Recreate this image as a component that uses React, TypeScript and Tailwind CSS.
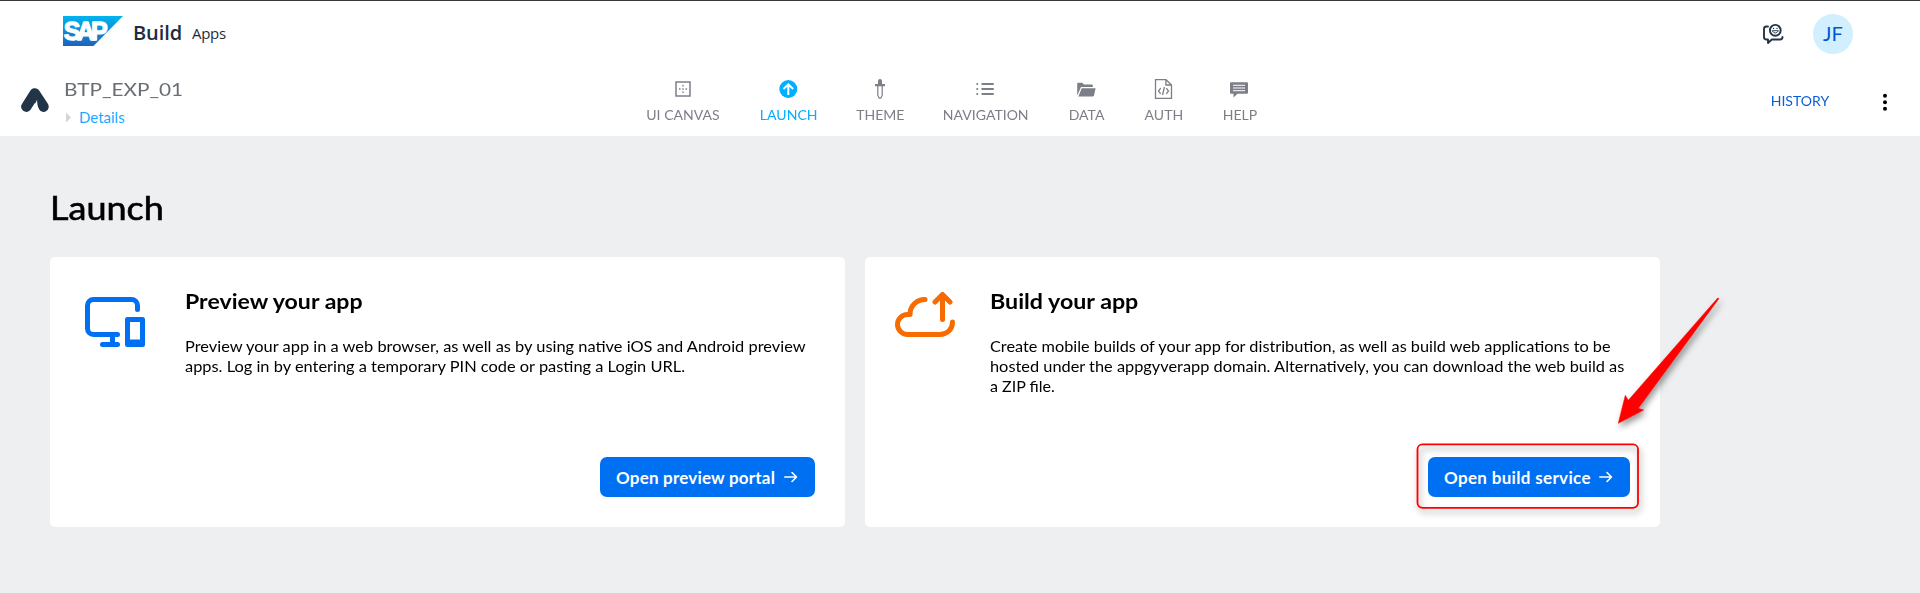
import React from "react";

type NavItem = { label: string; box: string; text: string; icon: React.ReactNode };

const navItems: NavItem[] = [
  {
    label: "UI CANVAS",
    box: "w-[74px]",
    text: "text-[#7d7f88]",
    icon: (
      <svg width="20" height="20" viewBox="0 0 20 20" fill="none">
        <rect x="3" y="3" width="14" height="14" stroke="#7d7f88" strokeWidth="1.5" />
        <path d="M9.3 6h1.4v1.5H9.3zM9.3 9.2h1.4v1.5H9.3zM9.3 12.5h1.4V14H9.3zM6 9.2h1.5v1.5H6zM12.5 9.2H14v1.5h-1.5z" fill="#7d7f88" />
      </svg>
    ),
  },
  {
    label: "LAUNCH",
    box: "w-[57px]",
    text: "text-[#00b0ff]",
    icon: (
      <svg width="20" height="20" viewBox="0.7 0 20 20" fill="none">
        <circle cx="10" cy="10" r="9" fill="#00b0ff" />
        <path d="M10 16V5.6M5.2 9.9L10 5.4l4.8 4.5" stroke="#fff" strokeWidth="2" />
      </svg>
    ),
  },
  {
    label: "THEME",
    box: "w-[46px]",
    text: "text-[#7d7f88]",
    icon: (
      <svg width="20" height="20" viewBox="0 0 20 20" fill="none">
        <path d="M8 5V2a2 2 0 0 1 4 0v3h3v2.3H5V5z" fill="#7d7f88" />
        <path d="M7.8 7v9.2L9.2 19.2h1.6l1.4-3V7" stroke="#7d7f88" strokeWidth="1.2" />
      </svg>
    ),
  },
  {
    label: "NAVIGATION",
    box: "w-[85px]",
    text: "text-[#7d7f88]",
    icon: (
      <svg width="20" height="20" viewBox="1 0 20 20" fill="none" stroke="#7d7f88" strokeWidth="2" strokeLinecap="round">
        <path d="M7.3 5H18M7.3 10H18M7.3 15H18" />
        <path d="M2.2 5h.1M2.2 10h.1M2.2 15h.1" />
      </svg>
    ),
  },
  {
    label: "DATA",
    box: "w-[37px]",
    text: "text-[#7d7f88]",
    icon: (
      <svg width="20" height="20" viewBox="1 0 20 20" fill="#7d7f88">
        <path d="M1.2 16V4.6Q1.2 3.8 2 3.8h4.2l1.8 1.8h8q.8 0 .8.8V8H5L1.5 16z" />
        <path d="M5.7 9.2H19.6L18 16.6q-.2.8-1 .8H2.4z" />
      </svg>
    ),
  },
  {
    label: "AUTH",
    box: "w-[38px]",
    text: "text-[#7d7f88]",
    icon: (
      <svg width="20" height="20" viewBox="0.5 0 20 20" fill="none" stroke="#7d7f88" strokeWidth="1.3">
        <path d="M2 .7h10.5L18 6v13.3H2zM12.4.7V6H18" />
        <path d="M7.2 9.2L5 12l2.2 2.8M12.8 9.2L15 12l-2.2 2.8M10.900 8l-1.800 8" />
      </svg>
    ),
  },
  {
    label: "HELP",
    box: "w-[33px]",
    text: "text-[#7d7f88]",
    icon: (
      <svg width="20" height="20" viewBox="1 0 20 20">
        <path d="M2 3.3h16q1 0 1 1v9.4q0 1-1 1H8.5l-4 3.7v-3.7H2q-1 0-1-1V4.3q0-1 1-1z" fill="#7d7f88" />
        <path d="M4 6.3h12M4 9h12M4 11.7h12" stroke="#fff" strokeWidth="1" />
      </svg>
    ),
  },
];

function SapLogo() {
  return (
    <svg width="60" height="30" viewBox="0 0 60 30" className="shrink-0">
      <defs>
        <linearGradient id="sap" x1="0" y1="0" x2="0" y2="1">
          <stop offset="0" stopColor="#00b4ee" />
          <stop offset="1" stopColor="#1f62bd" />
        </linearGradient>
      </defs>
      <path d="M0 0h60L30.5 30H0z" fill="url(#sap)" />
      <text x="0.8" y="24.3" fill="#fff" stroke="#fff" strokeWidth="1.3" strokeLinejoin="round" fontFamily="Liberation Sans, sans-serif" fontWeight="700" fontSize="25" textLength="44" lengthAdjust="spacing">SAP</text>
    </svg>
  );
}

function ArrowRight() {
  return (
    <svg width="14" height="12" viewBox="0 0 14 12" fill="none" stroke="#fff" strokeWidth="1.6" strokeLinecap="round" strokeLinejoin="round" className="-mt-px">
      <path d="M0.8 6h11.7M8 1.5L12.5 6 8 10.5" />
    </svg>
  );
}

function DevicesIcon() {
  return (
    <svg width="60" height="50" viewBox="0 0 60 50" fill="none" stroke="#0070f2" strokeWidth="5" strokeLinecap="round">
      <path d="M52.5 12.5V8.5a6 6 0 0 0-6-6h-38a6 6 0 0 0-6 6v23a6 6 0 0 0 6 6H32.5M27.5 37.5v10M17.5 47.5h15" />
      <path d="M42.5 20h15a2.5 2.5 0 0 1 2.5 2.5v25a2.5 2.5 0 0 1-2.5 2.5h-15a2.5 2.5 0 0 1-2.5-2.5v-25a2.5 2.5 0 0 1 2.5-2.5zM45 25v17.5h10V25z" fill="#0070f2" fillRule="evenodd" stroke="none" />
    </svg>
  );
}

function CloudIcon() {
  return (
    <svg width="60" height="45" viewBox="0 0 60 45" fill="none" stroke="#f76b00" strokeWidth="5" strokeLinecap="round" strokeLinejoin="round">
      <path d="M30 7.5C21.5 7.5 15 14 15 22.5H12.5a10 10 0 0 0 0 20H45c7 0 12.5-5 12.5-12.5" />
      <path d="M47.5 27.5V3M40 10l7.5-7.5L55 10" />
    </svg>
  );
}

export default function App() {
  return (
    <div className="relative flex h-[593px] w-full flex-col overflow-hidden bg-[#eeeff1] font-['Lato',sans-serif] text-black">
      <header className="flex h-[67px] items-start border-t border-[#38383a] bg-white pl-[63px]">
        <div className="flex pt-[15px]">
          <SapLogo />
          <div className="ml-[10px] w-[59px] font-['Open_Sans',sans-serif] text-[20px] leading-[34px] font-semibold tracking-[-0.1px] text-[#1d2d3e]">Build</div>
          <div className="font-['Open_Sans',sans-serif] text-[15px] leading-[34px] tracking-[-0.3px] text-[#1d2d3e]">Apps</div>
        </div>
        <div className="ml-auto flex items-center pt-[13px] pr-[67px]">
          <svg width="22" height="22" viewBox="0 0 22 22" fill="none" stroke="#223548" strokeWidth="1.9" strokeLinecap="round" strokeLinejoin="round" className="mr-[29px]">
            <path d="M6 3.5H4.5Q2 3.5 2 6v8Q2 16.5 4.5 16.5H6V20l3.8-3.5H18q2.5 0 2.5-2.5" />
            <circle cx="13.3" cy="7.3" r="5.4" />
            <path d="M10.3 8q3 4.4 6 0z" strokeWidth="0.9" />
            <path d="M11.5 5.4h.1M15 5.4h.1" strokeWidth="1.3" />
          </svg>
          <div className="flex size-10 items-center justify-center rounded-full bg-[#d1efff] pb-[2px] text-[20px] tracking-[0.2px] text-[#0057d2]">JF</div>
        </div>
      </header>

      <div className="flex h-[69px] items-start bg-white">
        <svg width="28" height="24" viewBox="0 0 28 24" className="mt-[21px] ml-[21px] shrink-0">
          <path d="M5.3 18.7L13.8 5.4L22.5 18.7" fill="none" stroke="#223548" strokeWidth="10.4" strokeLinecap="round" strokeLinejoin="round" />
          <path d="M10.7 24.2v-1.8L16.2 11.5Q15.6 17 18.5 22.5v1.7z" fill="#fff" />
        </svg>
        <div className="ml-[15px] w-[582px] pt-[10px]">
          <div className="origin-left scale-x-[1.155] text-[18px] leading-6 text-[#6a6d76]">BTP_EXP_01</div>
          <div className="mt-[6px] flex items-center gap-2 text-[15px] leading-5 text-[#1aa9ff]">
            <svg width="7" height="11" viewBox="0 0 7 11"><path d="M2 0.5v10l5-5z" fill="#d3d5d9" /></svg>
            <span>Details</span>
          </div>
        </div>
        <nav className="flex gap-10 pt-[12px]">
          {navItems.map((n) => (
            <div key={n.label} className={`flex flex-col items-center ${n.box}`}>
              {n.icon}
              <span className={`mt-[6px] scale-x-[1.08] text-[13px] leading-5 whitespace-nowrap ${n.text}`}>{n.label}</span>
            </div>
          ))}
        </nav>
        <div className="ml-auto flex items-center pt-[24px] pr-[32px]">
          <span className="mr-[53px] origin-right scale-x-[1.08] pb-px text-[13px] leading-5 text-[#0a5fd6]">HISTORY</span>
          <svg width="6" height="20" viewBox="0 0 6 20"><circle cx="3" cy="3.7" r="2" /><circle cx="3" cy="10.3" r="2" /><circle cx="3" cy="16.7" r="2" /></svg>
        </div>
      </div>

      <main className="pl-[50px]">
        <h1 className="mt-[52px] h-[69px] origin-left scale-x-[1.125] text-[32px] leading-10 [-webkit-text-stroke:0.6px_black]">Launch</h1>
        <div className="flex gap-5">
          <section className="flex h-[270px] w-[795px] rounded-[5px] bg-white pt-10 pl-[35px]">
            <div className="w-[100px] shrink-0"><DevicesIcon /></div>
            <div className="flex flex-col">
              <h2 className="-mt-[10px] origin-left scale-x-[1.1] text-[21px] leading-7 font-bold">Preview your app</h2>
              <p className="mt-[21px] text-[15px] leading-5 whitespace-nowrap">
                <span className="block origin-left scale-x-[1.093]">Preview your app in a web browser, as well as by using native iOS and Android preview</span>
                <span className="block origin-left scale-x-[1.092]">apps. Log in by entering a temporary PIN code or pasting a Login URL.</span>
              </p>
              <button className="mt-[81px] ml-[415px] flex h-10 w-[215px] items-center justify-between rounded-[7px] bg-[#0070f2] pr-[17px] pl-4 text-[17px] font-bold text-white">
                <span className="pt-[2px] tracking-[0.2px] whitespace-nowrap">Open preview portal</span><ArrowRight />
              </button>
            </div>
          </section>
          <section className="flex h-[270px] w-[795px] rounded-[5px] bg-white pt-10 pl-[30px]">
            <div className="-mt-[5px] w-[95px] shrink-0"><CloudIcon /></div>
            <div className="flex flex-col">
              <h2 className="-mt-[10px] origin-left scale-x-[1.105] text-[21px] leading-7 font-bold">Build your app</h2>
              <p className="mt-[21px] text-[15px] leading-5 whitespace-nowrap">
                <span className="block origin-left scale-x-[1.085]">Create mobile builds of your app for distribution, as well as build web applications to be</span>
                <span className="block origin-left scale-x-[1.09]">hosted under the appgyverapp domain. Alternatively, you can download the web build as</span>
                <span className="block origin-left scale-x-[1.07]">a ZIP file.</span>
              </p>
              <button className="mt-[61px] ml-[438px] flex h-10 w-[202px] items-center justify-between rounded-[7px] bg-[#0070f2] pr-[17px] pl-4 text-[17px] font-bold text-white">
                <span className="pt-[2px] tracking-[0.33px] whitespace-nowrap">Open build service</span><ArrowRight />
              </button>
            </div>
          </section>
        </div>
      </main>

      <svg width="330" height="240" viewBox="1400 285 330 240" className="pointer-events-none absolute top-[285px] left-[1400px]" fill="none">
        <defs>
          <filter id="shadow" x="-20%" y="-20%" width="140%" height="150%">
            <feDropShadow dx="2" dy="4" stdDeviation="3" floodColor="#000" floodOpacity="0.4" />
          </filter>
        </defs>
        <rect x="1417.5" y="444.3" width="220.5" height="63.5" rx="5" stroke="#ff0505" strokeWidth="1.8" filter="url(#shadow)" />
        <path d="M1618.3 423.3L1625.3 395.3L1628.3 400.3L1717.7 298L1719 298.5L1638.3 408.3L1643.7 410z" fill="#f00" stroke="#f00" strokeWidth="0.5" filter="url(#shadow)" />
      </svg>
    </div>
  );
}
